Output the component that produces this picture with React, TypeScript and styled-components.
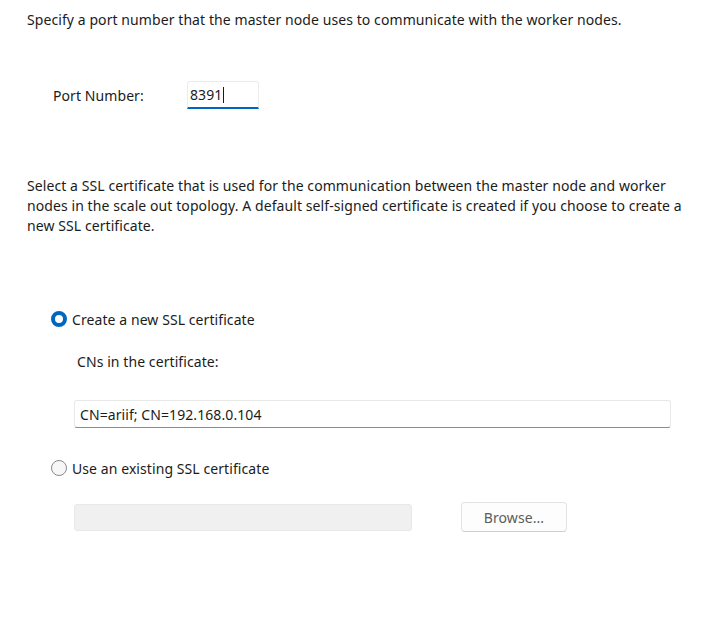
import React from 'react';
import styled, { createGlobalStyle } from 'styled-components';

const GlobalStyle = createGlobalStyle`
  html, body {
    margin: 0;
    padding: 0;
    background: #ffffff;
  }
  body {
    font-family: 'Noto Sans', 'Open Sans', sans-serif;
    font-size: 14px;
    letter-spacing: 0.08px;
    color: #1b1b1b;
  }
`;

const Page = styled.div`
  width: 725px;
  height: 643px;
  box-sizing: border-box;
  padding: 10px 0 0 27px;
  background: #ffffff;
`;

const Paragraph = styled.p<{ top: number }>`
  margin: ${(p) => p.top}px 0 0 0;
  line-height: 20px;
  white-space: nowrap;
`;

const PortRow = styled.div`
  display: flex;
  align-items: center;
  height: 28px;
  margin: 51px 0 0 26px;
`;

const FieldLabel = styled.span`
  width: 134px;
`;

const PortBox = styled.div`
  width: 72px;
  height: 28px;
  box-sizing: border-box;
  border: 1px solid #ececec;
  border-bottom: 2px solid #0067c0;
  border-radius: 3px 3px 0 0;
  display: flex;
  align-items: center;
  padding-left: 2px;
`;

const Caret = styled.span`
  display: inline-block;
  width: 1px;
  height: 16px;
  margin-left: 1px;
  background: #1b1b1b;
`;

const RadioRow = styled.label<{ top: number }>`
  display: flex;
  align-items: center;
  gap: 5px;
  margin: ${(p) => p.top}px 0 0 24px;
  height: 20px;
`;

const RadioDot = styled.span<{ checked?: boolean }>`
  width: 16px;
  height: 16px;
  box-sizing: border-box;
  border-radius: 50%;
  flex-shrink: 0;
  ${(p) =>
    p.checked
      ? 'border: 4.5px solid #0067c0; background: #ffffff;'
      : 'border: 1px solid #8a8a8a; background: #f7f7f7;'}
`;

const SubLabel = styled.div`
  margin: 23px 0 0 50px;
  height: 20px;
  line-height: 20px;
`;

const TextBox = styled.div`
  margin: 28px 0 0 47px;
  width: 597px;
  height: 28px;
  box-sizing: border-box;
  border: 1px solid #e8e8e8;
  border-bottom: 1px solid #8c8c8c;
  border-radius: 3px;
  display: flex;
  align-items: center;
  padding-left: 5px;
`;

const BrowseRow = styled.div`
  display: flex;
  align-items: center;
  margin: 24px 0 0 47px;
`;

const DisabledBox = styled.div`
  width: 338px;
  height: 27px;
  box-sizing: border-box;
  background: #f0f0f0;
  border: 1px solid #e8e8e8;
  border-radius: 3px;
`;

const Button = styled.div`
  margin-left: 49px;
  width: 106px;
  height: 30px;
  box-sizing: border-box;
  border: 1px solid #e3e3e3;
  border-bottom-color: #cfcfcf;
  border-radius: 4px;
  background: #fdfdfd;
  display: flex;
  align-items: center;
  justify-content: center;
  color: #5c5c5c;
`;

const App = () => (
  <Page>
    <GlobalStyle />
    <Paragraph top={0}>
      Specify a port number that the master node uses to communicate with the worker nodes.
    </Paragraph>
    <PortRow>
      <FieldLabel>Port Number:</FieldLabel>
      <PortBox>
        8391
        <Caret />
      </PortBox>
    </PortRow>
    <Paragraph top={67}>
      Select a SSL certificate that is used for the communication between the master node and worker
      <br />
      nodes in the scale out topology. A default self-signed certificate is created if you choose to create a
      <br />
      new SSL certificate.
    </Paragraph>
    <RadioRow top={73}>
      <RadioDot checked />
      Create a new SSL certificate
    </RadioRow>
    <SubLabel>CNs in the certificate:</SubLabel>
    <TextBox>CN=ariif; CN=192.168.0.104</TextBox>
    <RadioRow top={30}>
      <RadioDot />
      Use an existing SSL certificate
    </RadioRow>
    <BrowseRow>
      <DisabledBox />
      <Button>Browse...</Button>
    </BrowseRow>
  </Page>
);

export default App;
